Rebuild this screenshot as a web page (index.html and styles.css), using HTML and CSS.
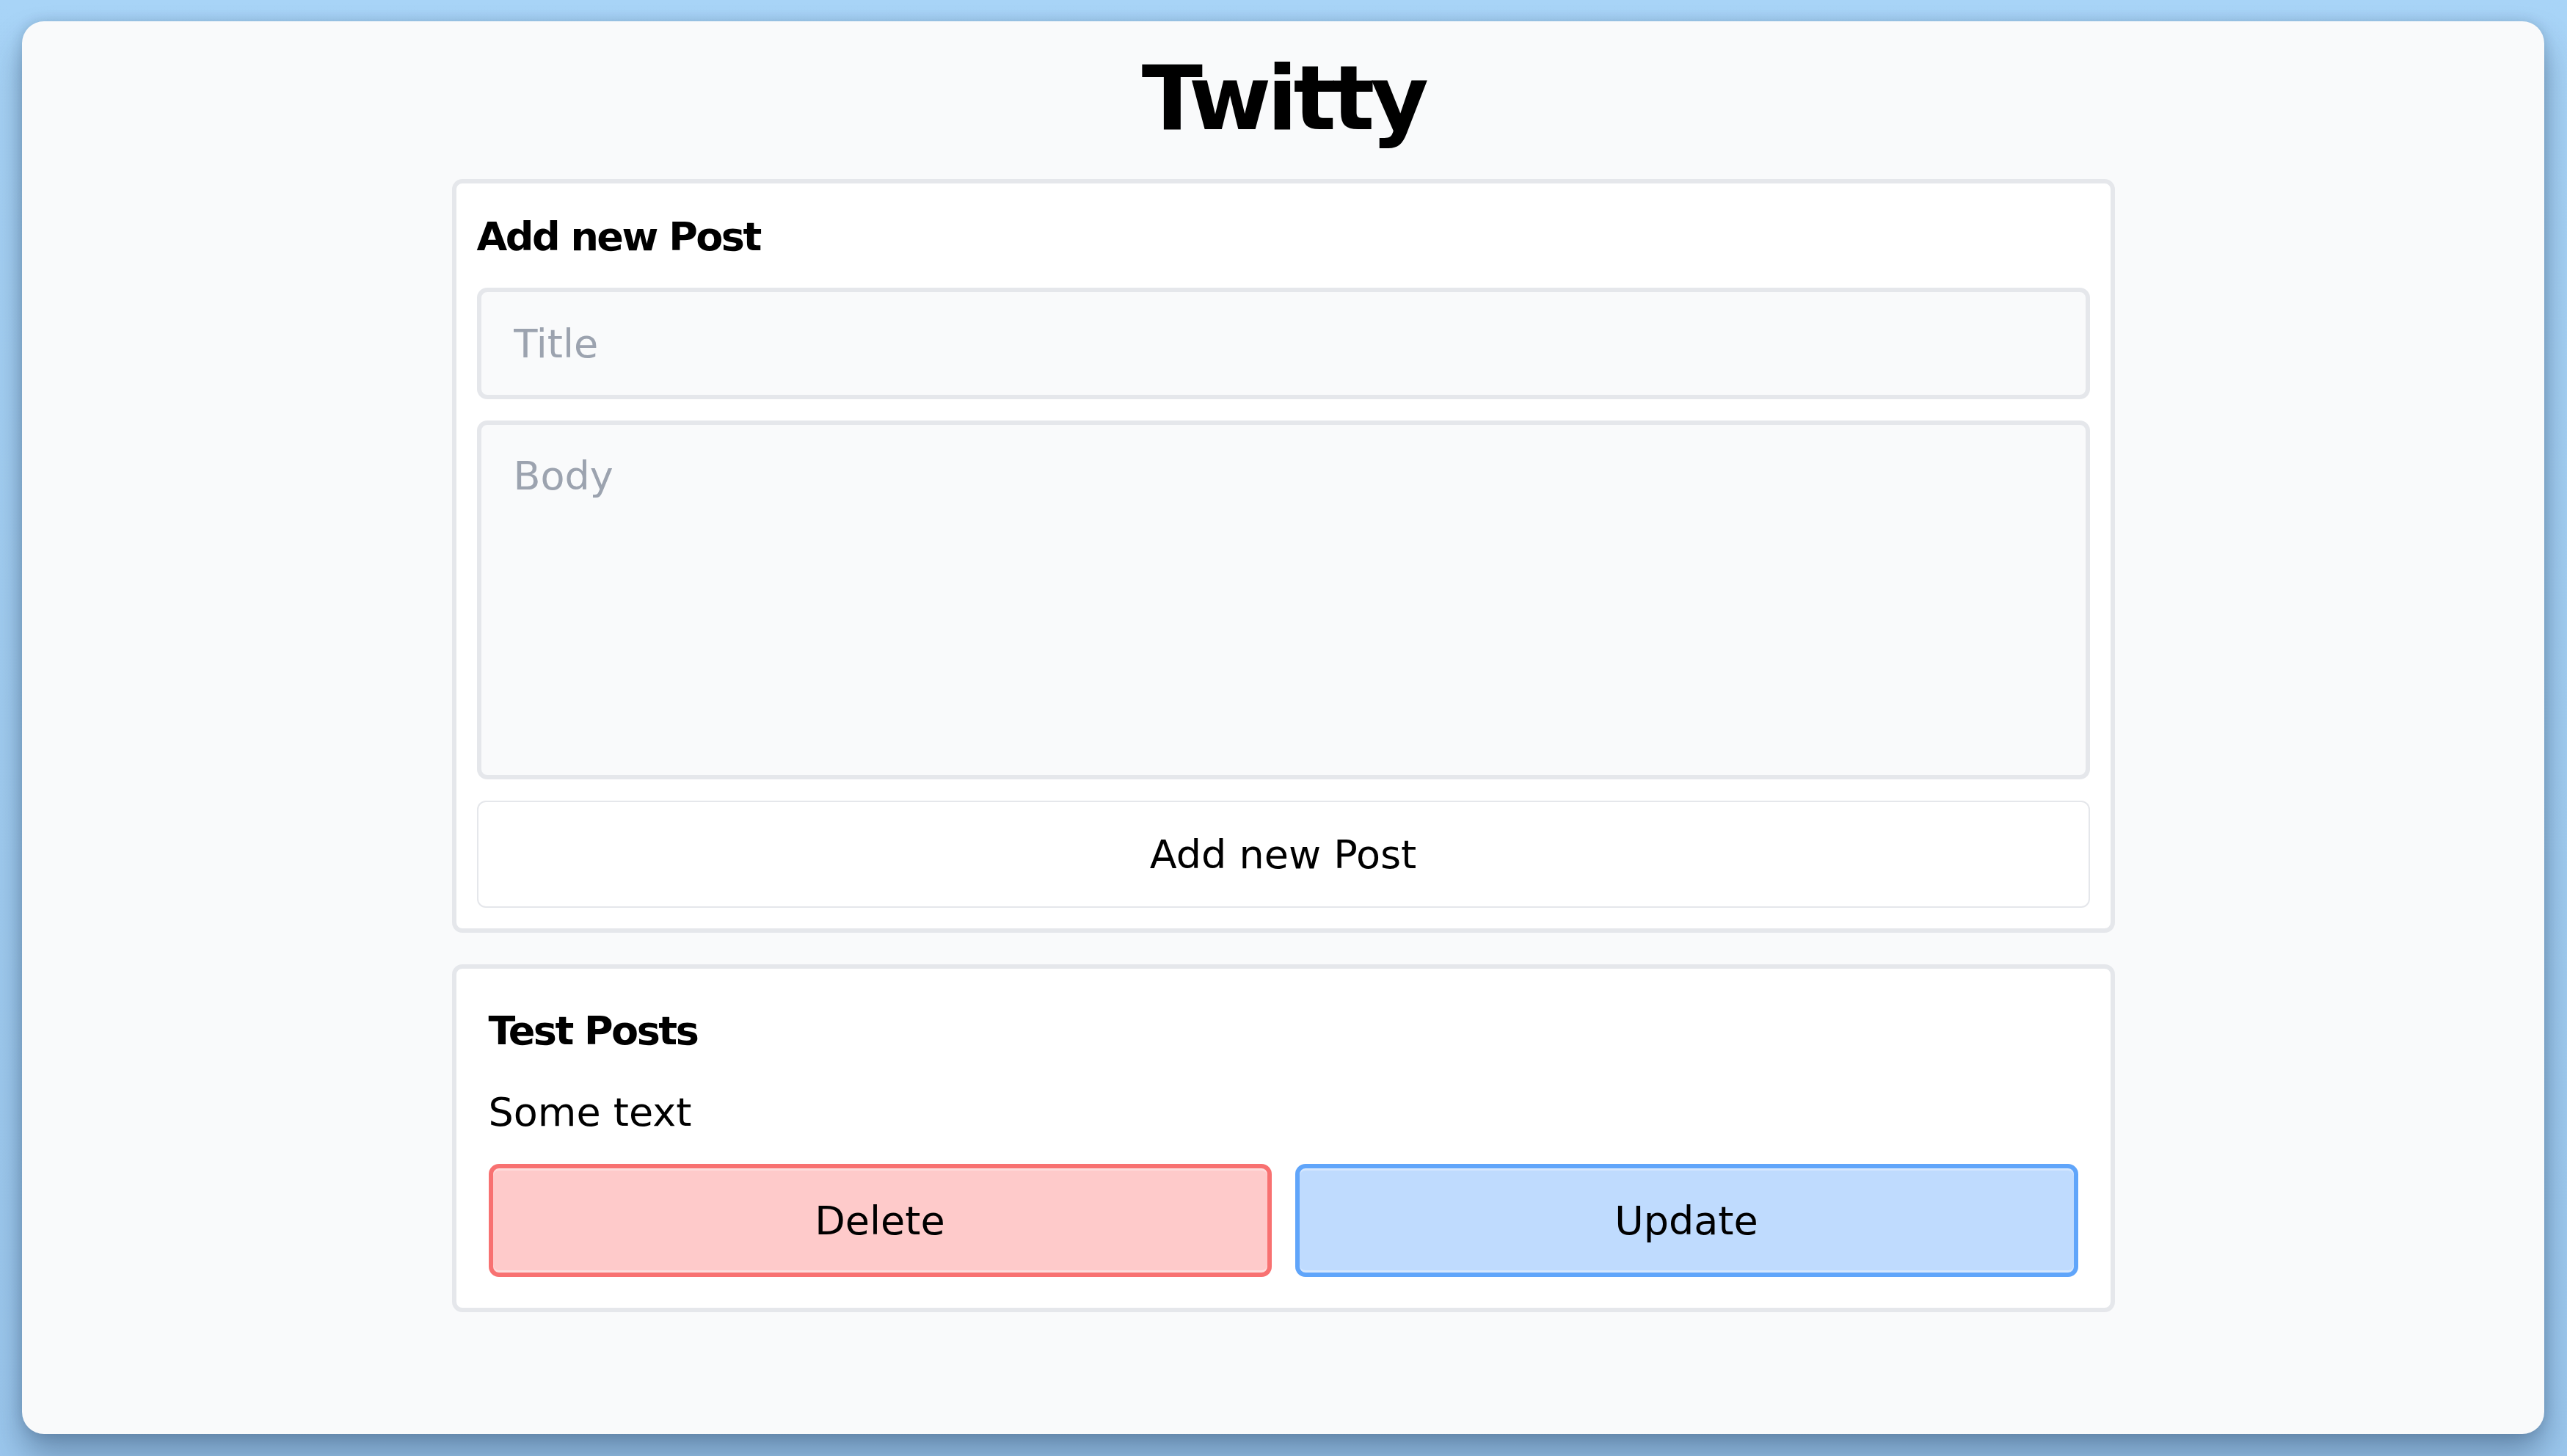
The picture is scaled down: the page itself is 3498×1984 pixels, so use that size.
FILE: index.html
```html
<!DOCTYPE html>
<html lang="en">
<head>
<meta charset="utf-8">
<title>Twitty</title>
<link rel="stylesheet" href="styles.css">
</head>
<body>
<div class="desktop">
  <div class="window">
    <h1 class="logo">Twitty</h1>
    <main class="column">
      <section class="card card-form">
        <h2 class="card-title">Add new Post</h2>
        <input class="field" type="text" placeholder="Title">
        <textarea class="field field-area" placeholder="Body"></textarea>
        <button class="btn btn-add" type="button">Add new Post</button>
      </section>
      <section class="card card-post">
        <h2 class="card-title">Test Posts</h2>
        <p class="post-body">Some text</p>
        <div class="actions">
          <button class="btn btn-delete" type="button">Delete</button>
          <button class="btn btn-update" type="button">Update</button>
        </div>
      </section>
    </main>
  </div>
</div>
</body>
</html>
```

FILE: styles.css
```css
* {
  box-sizing: border-box;
}

html, body {
  margin: 0;
  padding: 0;
}

body {
  font-family: "DejaVu Sans", "Noto Sans", sans-serif;
  color: #000;
  overflow: hidden;
}

.desktop {
  width: 3498px;
  height: 1984px;
  padding: 29px 31px 30px 30px;
  background: linear-gradient(180deg, #a8d4f7 0%, #a1cdf1 60%, #9cc8ee 100%);
}

.window {
  width: 100%;
  height: 100%;
  background: #f9fafb;
  border-radius: 30px;
  padding-top: 44px;
  box-shadow: 0 28px 46px rgba(20, 45, 75, 0.38), 0 0 16px rgba(20, 45, 75, 0.18);
}

.logo {
  margin: 0 0 49px;
  font-size: 122px;
  line-height: 122px;
  font-weight: 700;
  letter-spacing: -5.8px;
  text-align: center;
}

.column {
  width: 2266px;
  margin: 0 auto;
  display: flex;
  flex-direction: column;
  gap: 43px;
}

.card {
  background: #fff;
  border: 6px solid #e5e7eb;
  border-radius: 14px;
  display: flex;
  flex-direction: column;
}

.card-form {
  padding: 32px 28px 28px;
  gap: 29px;
}

.card-post {
  padding: 44px 44px 42px;
  gap: 30px;
}

.card-title {
  margin: 0;
  font-size: 54px;
  line-height: 81px;
  font-weight: 700;
  letter-spacing: -2.5px;
}

.post-body {
  margin: 0;
  font-size: 54px;
  line-height: 81px;
}

.field {
  display: block;
  width: 100%;
  height: 152px;
  margin: 0;
  padding: 0 44px;
  border: 6px solid #e5e7eb;
  border-radius: 14px;
  background: #f9fafb;
  font-family: inherit;
  font-size: 54px;
  line-height: 81px;
  color: #111;
  outline: none;
}

.field::placeholder {
  color: #9ca3af;
}

.field-area {
  height: 489px;
  padding: 29px 44px;
  resize: none;
}

.btn {
  margin: 0;
  font-family: inherit;
  font-size: 54px;
  line-height: 81px;
  color: #000;
  cursor: pointer;
}

.btn-add {
  height: 146px;
  background: #fff;
  border: 2px solid #e5e7eb;
  border-radius: 12px;
}

.actions {
  display: grid;
  grid-template-columns: 1fr 1fr;
  gap: 32px;
}

.btn-delete,
.btn-update {
  height: 154px;
  border-width: 6px;
  border-style: solid;
  border-radius: 14px;
  box-shadow: inset 0 3px 0 rgba(255, 255, 255, 0.35), inset 0 -3px 0 rgba(255, 255, 255, 0.35);
}

.btn-delete {
  background: #fecaca;
  border-color: #f87171;
}

.btn-update {
  background: #bfdbfe;
  border-color: #60a5fa;
}
```
